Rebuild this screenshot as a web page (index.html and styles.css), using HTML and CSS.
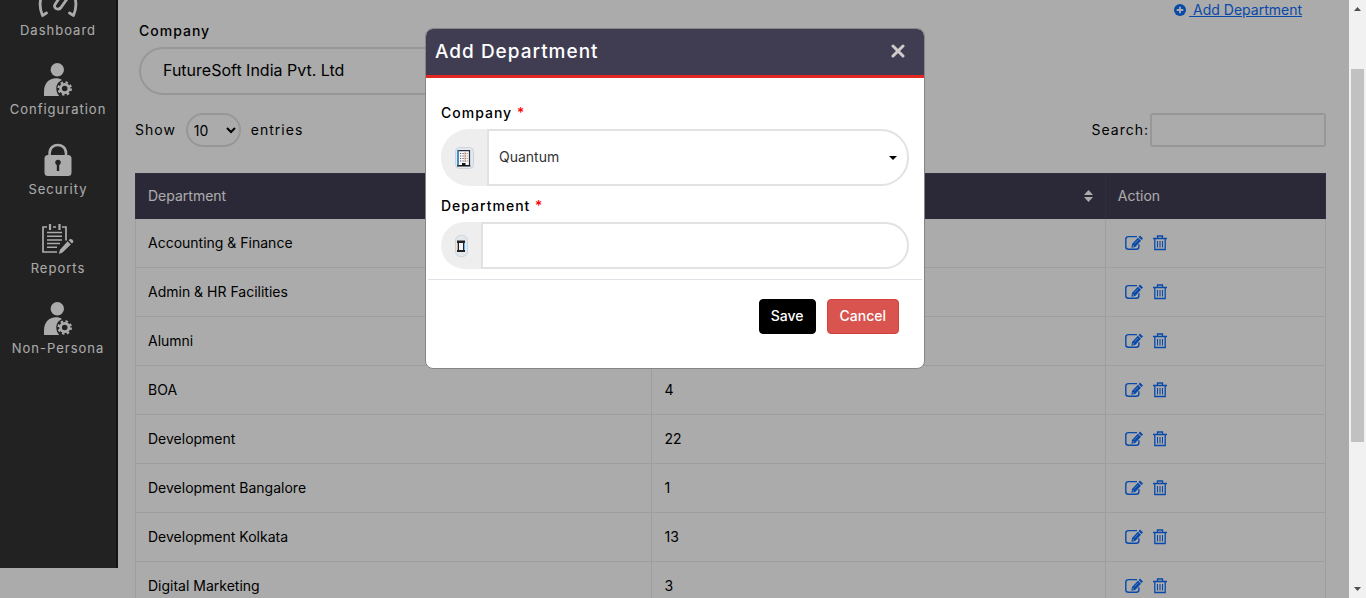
FILE: index.html
```html
<!DOCTYPE html>
<html lang="en">
<head>
<meta charset="utf-8">
<meta name="viewport" content="width=device-width, initial-scale=1">
<title>Department</title>
<link rel="stylesheet" href="styles.css">
</head>
<body>
<svg class="sprite" aria-hidden="true">
  <symbol id="person-gear" viewBox="0 0 28 34">
    <circle cx="13.300" cy="6.700" r="6.700"/>
    <path d="M0 33V29C0 20 5 15.200 12 15.200C14.500 15.200 16.500 15.800 18 17C14.500 18.500 12.300 21.600 12.300 25.400C12.300 28.500 13.500 31 15.300 33Z"/>
    <g fill="none" stroke="currentColor">
      <circle cx="20.700" cy="25.500" r="4.200" stroke-width="2.800"/>
      <circle cx="20.700" cy="25.500" r="6.200" stroke-width="2.200" stroke-dasharray="2.500 2.370"/>
    </g>
  </symbol>
  <symbol id="edit" viewBox="0 0 18 16">
    <path fill="none" stroke="currentColor" stroke-width="1.400" d="M12 1.600H3.500Q.8 1.600 .8 4.300V11.800Q.8 14.300 3.500 14.300H11.300Q13.900 14.300 13.900 11.800V9.300"/>
    <path d="M15 .6L18 3.400L16.600 5L13.500 2.200ZM12.900 2.800L16 5.700L10.200 12L6.400 12.700L7 9Z"/>
    <path fill="none" stroke="#fff" stroke-width=".5" d="M13 5L9.500 8.700"/>
    <path fill="#fff" d="M7.900 10L9.100 11.200L7.600 11.500Z"/>
  </symbol>
  <symbol id="trash" viewBox="0 0 14 16">
    <path fill="none" stroke="currentColor" stroke-width="1.300" d="M0 3.500H14M4.500 3.500V1H9.500V3.500M1.800 3.500V14.500H12.200V3.500"/>
    <path fill="none" stroke="currentColor" stroke-width="1.100" d="M4.500 6V12.500M7 6V12.500M9.500 6V12.500"/>
  </symbol>
</svg>

<div class="window">
  <div class="page">
    <nav class="sidebar">
      <ul class="menu">
        <li><a class="menu-item" href="#"><svg class="menu-icon gauge" viewBox="0 0 40 36"><g fill="none" stroke="currentColor" stroke-width="2.800" stroke-linejoin="round" stroke-linecap="round"><path d="M8.500 31L4.500 33.500C-2 18 6 3 20 3C34 3 42 18 35.500 33.500L31.500 31"/><path d="M29 17L23 25.500C20 29 15 26 17 22.500L22 15"/></g></svg><span>Dashboard</span></a></li>
        <li><a class="menu-item" href="#"><svg class="menu-icon person"><use href="#person-gear"/></svg><span>Configuration</span></a></li>
        <li><a class="menu-item" href="#"><svg class="menu-icon lock" viewBox="0 0 28 33"><path fill="none" stroke="currentColor" stroke-width="2.600" d="M5.600 12V9.800C5.600 -1.300 22 -1.300 22 9.800V12"/><path fill-rule="evenodd" d="M4 11.500H24Q27.500 11.500 27.500 15V29Q27.500 32.500 24 32.500H4Q.5 32.500 .5 29V15Q.5 11.500 4 11.500ZM12.800 21.500V27.500H15.200V21.500A2.800 2.800 0 1 0 12.800 21.500Z"/></svg><span>Security</span></a></li>
        <li><a class="menu-item" href="#"><svg class="menu-icon report" viewBox="0 0 32 31"><g fill="none" stroke="currentColor"><path stroke-width="1.700" d="M5 3.500H1V28.500H15M11 3.500H14M20 3.500H24V17"/><path stroke-width="2.200" d="M8 .5V6.500M17.500 .5V6.500"/><path stroke-width="1.500" d="M5 9H20M5 12.700H20M5 16.400H20M5 20.100H18M5 23.800H15"/></g><path d="M25.600 17.800L28.800 21L20.500 29L16.800 30.500L18 26.200ZM26.600 16.800L28 15.500Q31 15 31.500 18.200L29.900 19.900Z"/></svg><span>Reports</span></a></li>
        <li><a class="menu-item" href="#"><svg class="menu-icon person"><use href="#person-gear"/></svg><span>Non-Persona</span></a></li>
      </ul>
    </nav>

    <main class="content">
      <div class="actions"><a class="add-link" href="#"><svg class="plus" viewBox="0 0 12 12"><circle cx="6" cy="6" r="6"/><path stroke="#fff" stroke-width="1.800" d="M6 2.700V9.300M2.700 6H9.300"/></svg><span class="add-text">&nbsp;Add Department</span></a></div>
      <div class="filter">
        <label class="label" for="company-filter">Company</label>
        <select class="filter-select" id="company-filter"><option>FutureSoft India Pvt. Ltd</option></select>
      </div>
      <div class="toolbar">
        <label class="tool">Show <select class="length"><option>10</option><option>25</option></select> entries</label>
        <label class="tool search">Search:<input class="search-box" type="search"></label>
      </div>
      <table class="table">
        <colgroup><col class="col-name"><col class="col-count"><col class="col-action"></colgroup>
        <thead><tr>
          <th>Department</th>
          <th><div class="sortable"><span>Employees</span><svg class="sort" viewBox="0 0 9 12"><path d="M0 5L4.500 0L9 5ZM0 7H9L4.500 12Z"/></svg></div></th>
          <th>Action</th>
        </tr></thead>
        <tbody id="rows"></tbody>
      </table>
    </main>

    <div class="overlay">
      <form class="modal" role="dialog" aria-labelledby="modal-title">
        <header class="modal-head">
          <h2 class="modal-title" id="modal-title">Add Department</h2>
          <button class="close" type="button" aria-label="Close"><svg class="cross" viewBox="0 0 14 14"><path fill="none" stroke="currentColor" stroke-width="3" stroke-linecap="round" d="M2 2L12 12M12 2L2 12"/></svg></button>
        </header>
        <div class="modal-body">
          <label class="label" for="company">Company <span class="required">*</span></label>
          <div class="group tall">
            <span class="addon"><svg class="building" viewBox="0 0 19 22"><rect x=".5" y=".5" width="18" height="21" rx="4" fill="#e4e8ed" stroke="#c8d4de"/><path fill="#f8f8f8" stroke="#2b2b3f" stroke-width="1.200" d="M3 18.500V3.700H14.500V18.500Z"/><path stroke="#3498d8" stroke-width="1.400" d="M2.700 3V19"/><path stroke="#56567a" stroke-width="1.200" stroke-dasharray="1.200 1.300" d="M5 6.500H13M5 9H13M5 11.500H13M5 14H13"/><path stroke="#d6a56c" d="M10 5V15"/><path d="M7 16H10.500V19H7Z" fill="#181820"/><path stroke="#111" stroke-width="1.200" d="M2 19H15.500"/></svg></span>
            <select class="field" id="company"><option>Quantum</option></select>
            <svg class="caret" viewBox="0 0 8 4"><path d="M0 0H8L4 4Z"/></svg>
          </div>
          <label class="label" for="department">Department <span class="required">*</span></label>
          <div class="group">
            <span class="addon"><svg class="phone" viewBox="0 0 13 22"><rect x=".5" y=".5" width="12" height="21" rx="5" fill="#e4e8ed" stroke="#c8d4de"/><path fill="#222" d="M2 5.500H10V17H2Z"/><path fill="#eef7ff" d="M4 8H8V15H4Z"/><path stroke="#58b7f5" d="M9.500 8V15"/><path stroke="#d6a56c" d="M2.500 8V15"/></svg></span>
            <input class="field" id="department" type="text">
          </div>
        </div>
        <footer class="modal-foot">
          <button class="btn save" type="submit">Save</button>
          <button class="btn cancel" type="button">Cancel</button>
        </footer>
      </form>
    </div>
  </div>

  <div class="scrollbar" aria-hidden="true">
    <svg class="arrow" viewBox="0 0 7 4"><path d="M0 4H7L3.500 0Z"/></svg>
    <div class="track"><div class="thumb"></div></div>
    <svg class="arrow" viewBox="0 0 7 4"><path d="M0 0H7L3.500 4Z"/></svg>
  </div>
</div>
<script src="script.js"></script>
</body>
</html>
```
FILE: styles.css
```css
* { box-sizing: border-box; }
body { margin: 0; font: 14px/20px Inter, "Liberation Sans", sans-serif; color: #000; background: #fff; }
button, input, select { font: inherit; color: inherit; }
svg { display: block; fill: currentColor; flex: none; }
.sprite { position: absolute; width: 0; height: 0; }

.window { display: flex; height: 100vh; overflow: hidden; }
.page { position: relative; flex: 1; display: flex; align-items: flex-start; overflow: hidden; }

.sidebar { flex: none; width: 118px; height: calc(100vh - 30px); background: #333; border-right: 2px solid #1e1e1e; overflow: hidden; }
.menu { list-style: none; height: 398px; margin: -40px 0 0; padding: 0; display: grid; grid-template-rows: repeat(5, 1fr); }
.menu li { display: flex; align-items: flex-end; justify-content: center; }
.menu-item { display: flex; flex-direction: column; align-items: center; gap: 2px; color: #fff; text-decoration: none; font-size: 13px; letter-spacing: 1px; white-space: nowrap; }
.menu-icon { width: 28px; height: 34px; }
.menu-icon.gauge { width: 40px; height: 36px; }
.menu-icon.report { width: 32px; }

.content { flex: 1; min-width: 0; padding: 0 23px 0 17px; }
.actions { display: flex; justify-content: flex-end; padding-right: 24px; }
.add-link { display: flex; align-items: center; color: #0d6efd; text-decoration: none; }
.add-text { text-decoration: underline; }
.plus { width: 12px; height: 12px; margin-right: 3px; }
.label { display: block; font-weight: 500; letter-spacing: 1px; }
.filter { width: 50%; padding: 1px 4px 0; }
.filter-select { appearance: none; width: 100%; height: 48px; margin-top: 6px; padding: 0 22px 2px; font-size: 16px; border: 2px solid #e2e2e2; border-radius: 24px; background: #fff; }
.toolbar { display: flex; justify-content: space-between; margin: 18px 0 26px; }
.tool { display: flex; align-items: center; gap: 10px; letter-spacing: 1px; }
.search { gap: 1px; }
.length { width: 55px; height: 34px; padding: 0 2px; border: 2px solid #e2e2e2; border-radius: 17px; background: #fff; }
.search-box { width: 176px; height: 34px; border: 2px solid #e2e2e2; border-radius: 3px; background: #fff; }

.table { width: 100%; table-layout: fixed; border-collapse: collapse; }
.col-name { width: 43.4%; }
.col-count { width: 38.1%; }
.table th { height: 45px; padding: 0 12px; text-align: left; font-weight: 400; color: #fff; background: #403d53; border: 1px solid #4a475c; border-bottom: 0; }
.table td { height: 49px; padding: 0 12px; border: 1px solid #ececec; }
.table tbody tr:first-child td { border-top: 0; }
.sortable { display: flex; align-items: center; justify-content: space-between; }
.sort { width: 9px; height: 12px; }
.row-actions { display: flex; gap: 10px; padding-left: 7px; color: #0d6efd; }
.row-actions a { color: inherit; }
.edit { width: 18px; height: 16px; }
.trash { width: 14px; height: 16px; }

.overlay { position: absolute; inset: 0; display: flex; justify-content: center; align-items: flex-start; padding: 28px 0 0 1px; background: rgba(0, 0, 0, .33); }
.modal { width: 500px; background: #fff; border: 1px solid #858585; border-radius: 8px; overflow: hidden; }
.modal-head { display: flex; justify-content: space-between; align-items: center; height: 49px; padding: 0 19px 0 9px; background: #403d53; color: #fff; border-bottom: 3px solid #e32723; }
.modal-title { margin: 0; font-size: 19px; font-weight: 500; letter-spacing: 1px; }
.close { padding: 0 0 2px; border: 0; background: none; color: #d0cbca; }
.cross { width: 14px; height: 14px; }
.modal-body { padding: 25px 15px 10px; }
.required { color: #f00; }
.group { display: grid; grid-template-columns: auto 1fr; height: 47px; margin: 6px 0 0; }
.group.tall { height: 57px; margin-bottom: 10px; }
.addon { display: flex; align-items: center; padding: 0 13px 0 14px; background: #eee; border-radius: 24px 0 0 24px; }
.tall .addon { border-radius: 28px 0 0 28px; }
.building { width: 19px; height: 22px; }
.phone { width: 13px; height: 22px; }
.field { grid-area: 1 / 2; appearance: none; width: 100%; height: 100%; padding: 0 10px 2px; color: #333; background: #fff; border: 2px solid #e2e2e2; border-radius: 0 24px 24px 0; }
.tall .field { border-radius: 0 28px 28px 0; }
.caret { grid-area: 1 / 2; place-self: center end; width: 8px; height: 4px; margin-right: 12px; pointer-events: none; }
.modal-foot { display: flex; justify-content: flex-end; gap: 11px; margin: 0 2px; padding: 19px 23px 34px; border-top: 1px solid #dee2e6; }
.btn { height: 35px; padding: 0 12px 1px; font-weight: 500; color: #fff; border: 1px solid #000; border-radius: 4px; background: #000; }
.save { padding: 0 11px 1px; }
.cancel { background: #d9534f; border-color: #d43f3a; }

.scrollbar { flex: none; width: 17px; display: flex; flex-direction: column; align-items: center; padding: 7px 0; background: #f1f1f1; color: #505050; }
.arrow { width: 7px; height: 4px; }
.track { flex: 1; width: 100%; padding: 58px 2px 0; }
.thumb { height: 72%; background: #c1c1c1; }
```
FILE: script.js
```javascript
const departments = [
  ["Accounting & Finance", 6],
  ["Admin & HR Facilities", 5],
  ["Alumni", 2],
  ["BOA", 4],
  ["Development", 22],
  ["Development Bangalore", 1],
  ["Development Kolkata", 13],
  ["Digital Marketing", 3]
];

const body = document.getElementById("rows");
for (const [name, count] of departments) {
  const row = body.insertRow();
  row.insertCell().textContent = name;
  row.insertCell().textContent = count;
  row.insertCell().innerHTML = `<div class="row-actions">
    <a href="#" aria-label="Edit"><svg class="edit"><use href="#edit"/></svg></a>
    <a href="#" aria-label="Delete"><svg class="trash"><use href="#trash"/></svg></a>
  </div>`;
}
```
